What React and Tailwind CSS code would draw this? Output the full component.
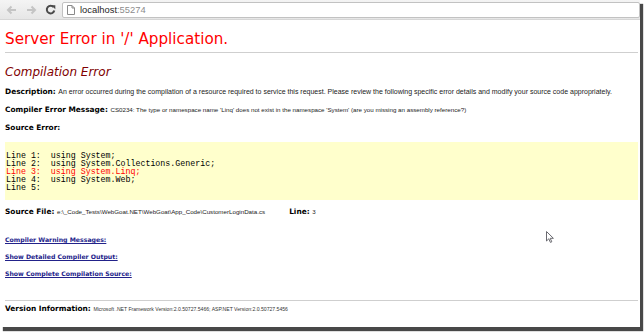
import React from "react";

const label = "font-['DejaVu_Sans',sans-serif] font-bold text-black text-[7.4px]";
const body = "font-['Liberation_Sans',Arial,sans-serif]";

const codeLines = [
  { n: "Line 1:", code: "using System;" },
  { n: "Line 2:", code: "using System.Collections.Generic;" },
  { n: "Line 3:", code: "using System.Linq;", error: true },
  { n: "Line 4:", code: "using System.Web;" },
  { n: "Line 5:", code: "" },
];

const links = [
  "Compiler Warning Messages:",
  "Show Detailed Compiler Output:",
  "Show Complete Compilation Source:",
];

function Toolbar() {
  return (
    <div className="h-[20px] flex items-center bg-gradient-to-b from-[#f4f4f4] to-[#e6e6e6] border-b border-[#d6d6d6]">
      {/* back / forward / reload */}
      <svg className="ml-[6px]" width="11" height="10" viewBox="0 0 11 10">
        <path d="M10 5H2M5.5 1.5L2 5l3.5 3.5" stroke="#c4c4c4" strokeWidth="2" fill="none" />
      </svg>
      <svg className="ml-[9px]" width="11" height="10" viewBox="0 0 11 10">
        <path d="M1 5h8M5.5 1.5L9 5 5.5 8.5" stroke="#c4c4c4" strokeWidth="2" fill="none" />
      </svg>
      <svg className="ml-[8px]" width="11" height="11" viewBox="0 0 11 11">
        <path d="M8.6 3.2A3.8 3.8 0 1 0 9.3 6.6" stroke="#4a4a4a" strokeWidth="2" fill="none" />
        <path d="M6.3 1.2h4v4z" fill="#4a4a4a" />
      </svg>
      <div className="ml-[6px] flex-1 h-[16px] bg-white border border-[#c2c2c2] rounded-[2px] flex items-center">
        <svg className="ml-[4px]" width="8" height="10" viewBox="0 0 8 10">
          <path d="M0.5 0.5h4.5l2.5 2.5v6.5h-7z M5 0.5v2.5h2.5" stroke="#8a8a8a" strokeWidth="1" fill="#fff" />
        </svg>
        <span className="ml-[5px] text-[9.4px] leading-[14px] font-['Liberation_Sans',Arial,sans-serif]">
          <span className="text-[#262626]">localhost</span>
          <span className="text-[#8c8c8c]">:55274</span>
        </span>
      </div>
    </div>
  );
}

export default function App() {
  return (
    <div className="w-[644px] h-[332px] bg-white">
      <div className="w-[640px] h-[327px] bg-white relative flex flex-col shadow-[3px_4px_1px_rgba(40,40,40,0.85)]">
        <Toolbar />

        <div className="pl-[5px] pr-[2px] flex flex-col">
          <h1 className="mt-[10px] text-[15.2px] leading-[18px] text-[#ff0000] font-['DejaVu_Sans',Verdana,sans-serif]">
            Server Error in '/' Application.
          </h1>
          <div className="mt-[4px] border-t border-[#cfcfcf]" />

          <h2 className="mt-[11px] text-[12px] leading-[16px] italic text-[#800000] font-['DejaVu_Sans',Verdana,sans-serif]">
            Compilation Error
          </h2>

          <p className="mt-[7px] text-[6px] leading-[10px] text-[#222]">
            <span className={label}>Description: </span>
            <span className={`${body} text-[7px]`}>
              An error occurred during the compilation of a resource required to service this request. Please review the following specific error details and modify your source code appropriately.
            </span>
          </p>
          <p className="mt-[8px] text-[6px] leading-[10px] text-[#222]">
            <span className={label}>Compiler Error Message: </span>
            <span className={`${body} text-[6.2px]`}>
              CS0234: The type or namespace name 'Linq' does not exist in the namespace 'System' (are you missing an assembly reference?)
            </span>
          </p>
          <p className={`mt-[8px] leading-[10px] ${label}`}>Source Error:</p>

          <div className="mt-[9px] h-[58px] bg-[#ffffcc] pl-[1px] pt-[10px] font-['Liberation_Mono',monospace] text-[8.3px] leading-[8px] whitespace-pre">
            {codeLines.map((l) => (
              <div key={l.n} className={l.error ? "text-[#ff0000]" : "text-black"}>
                {l.n + "  " + l.code}
              </div>
            ))}
          </div>

          <p className="mt-[7px] text-[6px] leading-[10px] text-[#222]">
            <span className={label}>Source File: </span>
            <span className={`${body} text-[6.2px]`}>e:\_Code_Tests\WebGoat.NET\WebGoat\App_Code\CustomerLoginData.cs</span>
            <span className="inline-block w-[24px]" />
            <span className={label}>Line: </span>
            <span className={`${body} text-[6.2px]`}>3</span>
          </p>

          <div className="mt-[18px] flex flex-col gap-[7px]">
            {links.map((t) => (
              <a
                key={t}
                href="#"
                className="text-[6.2px] leading-[10px] font-bold underline text-[#22228a] font-['DejaVu_Sans',Verdana,sans-serif]"
              >
                {t}
              </a>
            ))}
          </div>

          <div className="mt-[21px] border-t border-[#cfcfcf]" />
          <p className="mt-[3px] text-[6px] leading-[10px] text-[#333]">
            <span className={label}>Version Information: </span>
            <span className={`${body} text-[5.1px]`}>Microsoft .NET Framework Version:2.0.50727.5466; ASP.NET Version:2.0.50727.5456</span>
          </p>
        </div>

        {/* mouse pointer */}
        <svg className="absolute left-[546px] top-[231px]" width="9" height="12" viewBox="0 0 9 12">
          <path d="M0.5 0.5v9.5l2.3-2.2 1.6 3.6 1.4-0.6-1.6-3.5h3.2z" fill="#fff" stroke="#6a6a70" strokeWidth="1" />
        </svg>
      </div>
    </div>
  );
}
